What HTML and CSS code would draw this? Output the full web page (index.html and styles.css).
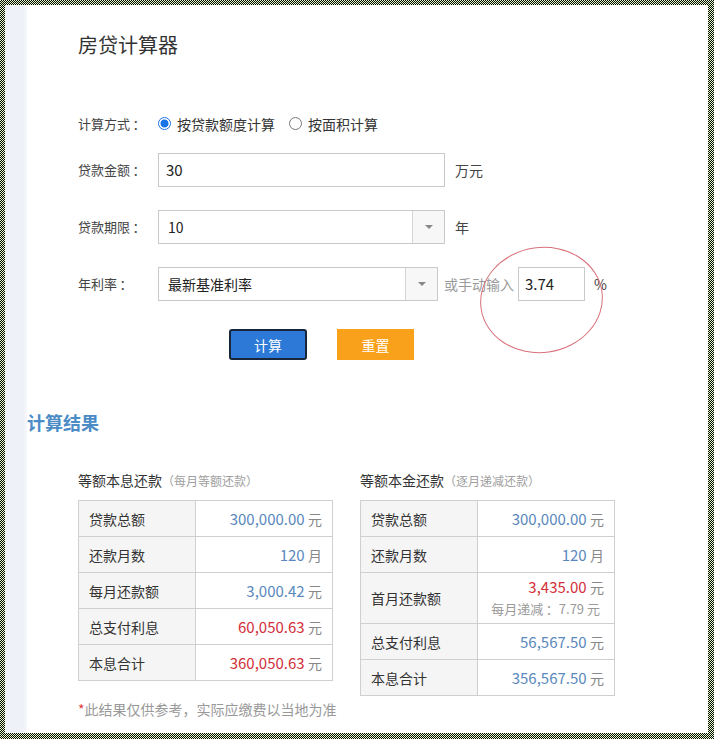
FILE: index.html
```html
<!DOCTYPE html>
<html lang="zh-CN">
<head>
<meta charset="utf-8">
<title>房贷计算器</title>
<link rel="stylesheet" href="styles.css">
</head>
<body>
<div class="frame">
  <div class="page">
    <div class="strip"></div>
    <div class="content">
      <h1 class="title">房贷计算器</h1>

      <div class="form">
        <div class="row row-radio">
          <span class="label">计算方式&thinsp;：</span>
          <span class="radio checked"></span><span class="radio-text">按贷款额度计算</span>
          <span class="radio"></span><span class="radio-text">按面积计算</span>
        </div>
        <div class="row">
          <span class="label">贷款金额&thinsp;：</span>
          <div class="input wide">30</div>
          <span class="unit">万元</span>
        </div>
        <div class="row">
          <span class="label">贷款期限&thinsp;：</span>
          <div class="select wide"><span class="sel-text">10</span><span class="sel-btn"><span class="caret"></span></span></div>
          <span class="unit">年</span>
        </div>
        <div class="row rate-row">
          <span class="label">年利率&thinsp;：</span>
          <div class="select narrow"><span class="sel-text">最新基准利率</span><span class="sel-btn"><span class="caret"></span></span></div>
          <span class="hint">或手动输入</span>
          <div class="input small">3.74</div>
          <span class="pct">%</span>
          <div class="circle"></div>
        </div>
        <div class="buttons">
          <span class="btn btn-calc">计算</span>
          <span class="btn btn-reset">重置</span>
        </div>
      </div>

      <h2 class="result-title">计算结果</h2>

      <div class="tables">
        <div class="tbl-col">
          <div class="tbl-title">等额本息还款<span class="sub">（每月等额还款）</span></div>
          <table class="tbl">
            <tr><td class="k">贷款总额</td><td class="v"><span class="blue">300,000.00</span> <span class="u">元</span></td></tr>
            <tr><td class="k">还款月数</td><td class="v"><span class="blue">120</span> <span class="u">月</span></td></tr>
            <tr><td class="k">每月还款额</td><td class="v"><span class="blue">3,000.42</span> <span class="u">元</span></td></tr>
            <tr><td class="k">总支付利息</td><td class="v"><span class="red">60,050.63</span> <span class="u">元</span></td></tr>
            <tr><td class="k">本息合计</td><td class="v"><span class="red">360,050.63</span> <span class="u">元</span></td></tr>
          </table>
        </div>
        <div class="tbl-col">
          <div class="tbl-title">等额本金还款<span class="sub">（逐月递减还款）</span></div>
          <table class="tbl">
            <tr><td class="k">贷款总额</td><td class="v"><span class="blue">300,000.00</span> <span class="u">元</span></td></tr>
            <tr><td class="k">还款月数</td><td class="v"><span class="blue">120</span> <span class="u">月</span></td></tr>
            <tr class="tall"><td class="k">首月还款额</td><td class="v"><div><span class="red">3,435.00</span> <span class="u">元</span></div><div class="dec">每月递减&thinsp;：7.79 元</div></td></tr>
            <tr><td class="k">总支付利息</td><td class="v"><span class="blue">56,567.50</span> <span class="u">元</span></td></tr>
            <tr><td class="k">本息合计</td><td class="v"><span class="blue">356,567.50</span> <span class="u">元</span></td></tr>
          </table>
        </div>
      </div>

      <p class="note"><span class="star">*</span>此结果仅供参考，实际应缴费以当地为准</p>
    </div>
  </div>
</div>
</body>
</html>
```
FILE: styles.css
```css
* { box-sizing: border-box; }
html, body { margin: 0; padding: 0; }
body {
  font-family: "Noto Sans CJK SC", "Noto Sans", sans-serif;
  color: #333;
  width: 714px;
  height: 739px;
  overflow: hidden;
}
.frame {
  width: 714px;
  height: 739px;
  padding: 5px 6px 6px 5px;
  background: repeating-conic-gradient(#000 0 25%, #e4ffc8 0 50%) 0 0 / 2px 2px;
}
.page {
  height: 100%;
  background: #fff;
  display: flex;
}
.strip {
  width: 22px;
  flex: none;
  background: linear-gradient(to right, #eef1f7 0, #eef1f7 18px, #f6f8fb 22px);
}
.content {
  flex: 1;
  position: relative;
}
.title {
  margin: 0;
  padding: 25px 0 0 51px;
  font-size: 20px;
  font-weight: normal;
  line-height: 30px;
  color: #333;
}
.form {
  margin-top: 47px;
  padding-left: 51px;
}
.row {
  display: flex;
  align-items: center;
  height: 33px;
  margin-bottom: 24px;
  font-size: 13px;
  position: relative;
}
.row-radio { margin-bottom: 13px; }
.label {
  width: 80px;
  flex: none;
  color: #444;
  font-size: 13px;
}
.radio {
  width: 13px;
  height: 13px;
  border-radius: 50%;
  border: 1px solid #777;
  background: #fff;
  flex: none;
  margin-right: 6px;
}
.radio.checked {
  border-color: #1a73e8;
  background: radial-gradient(circle, #1a73e8 0 3.6px, #fff 4.4px);
}
.radio-text {
  font-size: 14px;
  color: #333;
  margin-right: 14px;
}
.input {
  height: 34px;
  border: 1px solid #c9c9c9;
  background: #fff;
  padding-left: 7px;
  font-size: 15px;
  line-height: 32px;
  color: #222;
}
.input.wide { width: 287px; }
.input.small { width: 67px; padding-left: 6px; }
.unit {
  margin-left: 10px;
  font-size: 14px;
  color: #444;
}
.select {
  height: 34px;
  border: 1px solid #c9c9c9;
  display: flex;
  background: #fff;
}
.select.wide { width: 287px; }
.select.narrow { width: 280px; }
.sel-text {
  flex: 1;
  padding-left: 9px;
  font-size: 14px;
  line-height: 32px;
  color: #222;
}
.sel-btn {
  width: 32px;
  flex: none;
  border-left: 1px solid #d6d6d6;
  background: #f7f7f7;
  display: flex;
  align-items: center;
  justify-content: center;
}
.caret {
  width: 0;
  height: 0;
  border-left: 4px solid transparent;
  border-right: 4px solid transparent;
  border-top: 4px solid #888;
}
.hint {
  margin-left: 6px;
  margin-right: 4px;
  font-size: 14px;
  color: #9a9a9a;
}
.pct {
  margin-left: 9px;
  font-size: 14px;
  color: #444;
}
.circle {
  position: absolute;
  left: 402px;
  top: -20px;
  width: 123px;
  height: 106px;
  border: 1px solid #d9707a;
  border-radius: 50%;
  transform: rotate(-8deg);
  pointer-events: none;
}
.buttons {
  display: flex;
  gap: 30px;
  padding-left: 151px;
  margin-top: 29px;
}
.btn {
  height: 31px;
  width: 78px;
  display: flex;
  align-items: center;
  justify-content: center;
  font-size: 14px;
  color: #fff;
  border-radius: 3px;
}
.btn-calc {
  background: #2c79d8;
  border: 2px solid #17263a;
}
.btn-reset {
  background: #f9a11b;
  border-radius: 0;
  width: 77px;
}
.result-title {
  margin: 49px 0 0 0;
  font-size: 18px;
  font-weight: bold;
  line-height: 26px;
  color: #4b8bc6;
}
.tables {
  display: flex;
  gap: 28px;
  margin-top: 35px;
  padding-left: 51px;
  align-items: flex-start;
}
.tbl-col { width: 254px; }
.tbl-title {
  font-size: 14px;
  line-height: 20px;
  color: #333;
  margin-bottom: 9px;
}
.sub {
  font-size: 12px;
  color: #a0a0a0;
}
.tbl {
  width: 255px;
  border-collapse: collapse;
  font-size: 14px;
}
.tbl td {
  border: 1px solid #cfcfcf;
  height: 36px;
  padding: 0;
}
.tbl td.k {
  width: 117px;
  background: #f5f5f5;
  padding-left: 10px;
  color: #333;
}
.tbl td.v {
  text-align: right;
  padding-right: 10px;
  font-size: 15px;
}
.tbl tr.tall td { height: 51px; }
.tbl tr.tall td.v { line-height: 22px; }
.blue { color: #5a88bd; }
.red { color: #d2303a; }
.u { color: #888; font-size: 14px; }
.dec {
  font-size: 13px;
  color: #9a9a9a;
  padding-right: 4px;
}
.note {
  margin: 3px 0 0 51px;
  font-size: 14px;
  line-height: 20px;
  color: #999;
}
.star { color: #e0403a; }
```
